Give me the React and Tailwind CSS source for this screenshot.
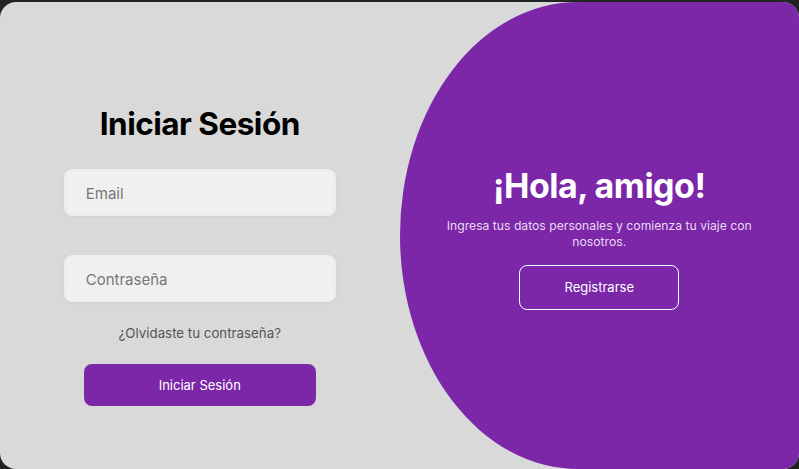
import { useState } from "react";

export default function App() {
  const [email, setEmail] = useState("");
  const [password, setPassword] = useState("");

  return (
    <div
      className="min-h-screen bg-[#232323] pt-[2px]"
      style={{ fontFamily: "Inter, 'Noto Sans', sans-serif" }}
    >
      <div className="flex h-[467px] w-full overflow-hidden rounded-[16px] bg-[#d9d9d9]">
        {/* Login */}
        <div className="flex w-1/2 flex-col items-center pt-[104px]">
          <h1 className="text-[31.5px] leading-[36px] font-bold tracking-[-0.5px] text-black">
            Iniciar Sesión
          </h1>

          <input
            type="email"
            value={email}
            onChange={(e) => setEmail(e.target.value)}
            placeholder="Email"
            className="mt-[27px] h-[47px] w-[272px] rounded-lg border-2 border-[#ededed] bg-[#f0f0f0] px-[20px] pt-px text-[15px] text-[#333] shadow-[0_1px_3px_rgba(0,0,0,0.05)] outline-none placeholder:text-[#777]"
          />
          <input
            type="password"
            value={password}
            onChange={(e) => setPassword(e.target.value)}
            placeholder="Contraseña"
            className="mt-[39px] h-[47px] w-[272px] rounded-lg border-2 border-[#ededed] bg-[#f0f0f0] px-[20px] pt-px text-[15px] text-[#333] shadow-[0_1px_3px_rgba(0,0,0,0.05)] outline-none placeholder:text-[#777]"
          />

          <a href="#" className="mt-[21px] text-[13.3px] leading-5 text-[#555]">
            ¿Olvidaste tu contraseña?
          </a>

          <button className="mt-[21px] h-[42px] w-[232px] rounded-lg bg-[#7b27a8] pt-px text-[13px] text-white">
            Iniciar Sesión
          </button>
        </div>

        {/* Panel */}
        <div className="flex w-1/2 flex-col items-center rounded-l-[178px_50%] bg-[#7b27a8] pt-[164px]">
          <h2 className="text-[34px] leading-[40px] font-bold tracking-[-0.5px] text-white">
            ¡Hola, amigo!
          </h2>
          <p className="mt-3 w-[320px] text-center text-[12.2px] leading-4 text-[#ead9f3]">
            Ingresa tus datos personales y comienza tu viaje con nosotros.
          </p>
          <button className="mt-[15px] h-[45px] w-[160px] rounded-lg border border-white pt-px text-[13px] text-white">
            Registrarse
          </button>
        </div>
      </div>
    </div>
  );
}
